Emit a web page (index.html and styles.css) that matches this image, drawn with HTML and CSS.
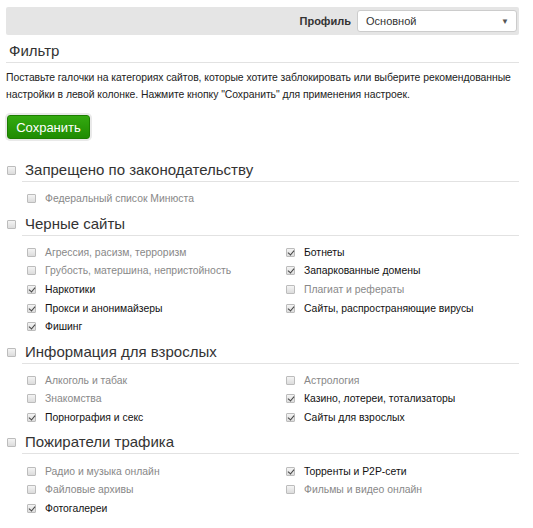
FILE: index.html
```html
<!DOCTYPE html>
<html lang="ru">
<head>
<meta charset="utf-8">
<link rel="stylesheet" href="styles.css">
</head>
<body>
<div class="page">
  <div class="topbar">
    <span class="profile-label">Профиль</span>
    <div class="select"><span>Основной</span><span class="arrow">▼</span></div>
  </div>
  <h1 class="title">Фильтр</h1>
  <p class="intro">Поставьте галочки на категориях сайтов, которые хотите заблокировать или выберите рекомендованные настройки в левой колонке. Нажмите кнопку "Сохранить" для применения настроек.</p>
  <button class="btn">Сохранить</button>

  <div class="section">
    <div class="sec-head"><span class="cb"></span><h2>Запрещено по законодательству</h2></div>
    <div class="items">
      <div class="item off"><span class="cb"></span>Федеральный список Минюста</div>
    </div>
  </div>

  <div class="section">
    <div class="sec-head"><span class="cb"></span><h2>Черные сайты</h2></div>
    <div class="items">
      <div class="item off"><span class="cb"></span>Агрессия, расизм, терроризм</div>
      <div class="item on"><span class="cb checked"></span>Ботнеты</div>
      <div class="item off"><span class="cb"></span>Грубость, матершина, непристойность</div>
      <div class="item on"><span class="cb checked"></span>Запаркованные домены</div>
      <div class="item on"><span class="cb checked"></span>Наркотики</div>
      <div class="item off"><span class="cb"></span>Плагиат и рефераты</div>
      <div class="item on"><span class="cb checked"></span>Прокси и анонимайзеры</div>
      <div class="item on"><span class="cb checked"></span>Сайты, распространяющие вирусы</div>
      <div class="item on"><span class="cb checked"></span>Фишинг</div>
    </div>
  </div>

  <div class="section">
    <div class="sec-head"><span class="cb"></span><h2>Информация для взрослых</h2></div>
    <div class="items">
      <div class="item off"><span class="cb"></span>Алкоголь и табак</div>
      <div class="item off"><span class="cb"></span>Астрология</div>
      <div class="item off"><span class="cb"></span>Знакомства</div>
      <div class="item on"><span class="cb checked"></span>Казино, лотереи, тотализаторы</div>
      <div class="item on"><span class="cb checked"></span>Порнография и секс</div>
      <div class="item on"><span class="cb checked"></span>Сайты для взрослых</div>
    </div>
  </div>

  <div class="section">
    <div class="sec-head"><span class="cb"></span><h2>Пожиратели трафика</h2></div>
    <div class="items">
      <div class="item off"><span class="cb"></span>Радио и музыка онлайн</div>
      <div class="item on"><span class="cb checked"></span>Торренты и P2P-сети</div>
      <div class="item off"><span class="cb"></span>Файловые архивы</div>
      <div class="item off"><span class="cb"></span>Фильмы и видео онлайн</div>
      <div class="item on"><span class="cb checked"></span>Фотогалереи</div>
    </div>
  </div>
</div>
</body>
</html>
```
FILE: styles.css
```css
* { box-sizing: border-box; }
html, body { margin: 0; padding: 0; background: #fff; }
body { font-family: "Liberation Sans", Arial, sans-serif; font-size: 10.4px; color: #222; }
.page { width: 513px; margin: 7px 0 0 6px; }
.topbar {
  height: 28px; background: #e5e5e5; border-radius: 2px;
  display: flex; justify-content: flex-end; align-items: center; padding-right: 2px;
}
.profile-label { font-weight: bold; font-size: 11px; color: #333; margin-right: 6px; }
.select {
  width: 160px; height: 22px; background: #fff; border: 1px solid #ccc; border-radius: 3px;
  display: flex; align-items: center; justify-content: space-between; padding: 0 7px 0 8px;
  font-size: 11px; color: #333;
}
.arrow { font-size: 8px; color: #555; }
.title {
  margin: 0; font-weight: normal; font-size: 15px; color: #333;
  height: 28px; line-height: 31px; padding-left: 3px; border-bottom: 1px solid #e2e2e2;
}
.intro { margin: 6px 0 0 0; line-height: 17px; color: #222; letter-spacing: -0.05px; }
.btn {
  margin: 12px 0 0 1px; width: 83px; height: 24px; display: block;
  font-family: inherit; font-size: 13px; color: #fff;
  background: linear-gradient(#34aa10, #1f8c02); border: 1px solid #1c7d00; border-radius: 3px;
  box-shadow: 0 0 0 2px #e9e9e9; padding: 0;
}
.section { margin-top: 20px; }
.section + .section { margin-top: 4.5px; }
.sec-head { display: flex; align-items: center; padding-left: 1px; }
.sec-head .cb { margin-right: 6px; }
.sec-head h2 {
  flex: 1; margin: 0; font-weight: normal; font-size: 15px; color: #333;
  line-height: 22px; border-bottom: 1px solid #e2e2e2; padding-left: 3px; height: 23px;
}
.items {
  display: grid; grid-template-columns: 259px 1fr; margin: 7.5px 0 0 21px;
}
.item { display: flex; align-items: center; height: 18.6px; }
.item .cb { margin-right: 9px; }
.item.off { color: #888; }
.item.on { color: #111; }
.cb {
  display: inline-block; width: 9px; height: 9px; flex: none; position: relative;
  border: 1px solid #bcbcbc; border-radius: 1px;
  background: linear-gradient(#f4f4f4, #dcdcdc);
}
.cb.checked::after {
  content: ""; position: absolute; left: 2px; top: 0px; width: 3px; height: 5px;
  border: solid #444; border-width: 0 1.5px 1.5px 0; transform: rotate(40deg);
}
```
